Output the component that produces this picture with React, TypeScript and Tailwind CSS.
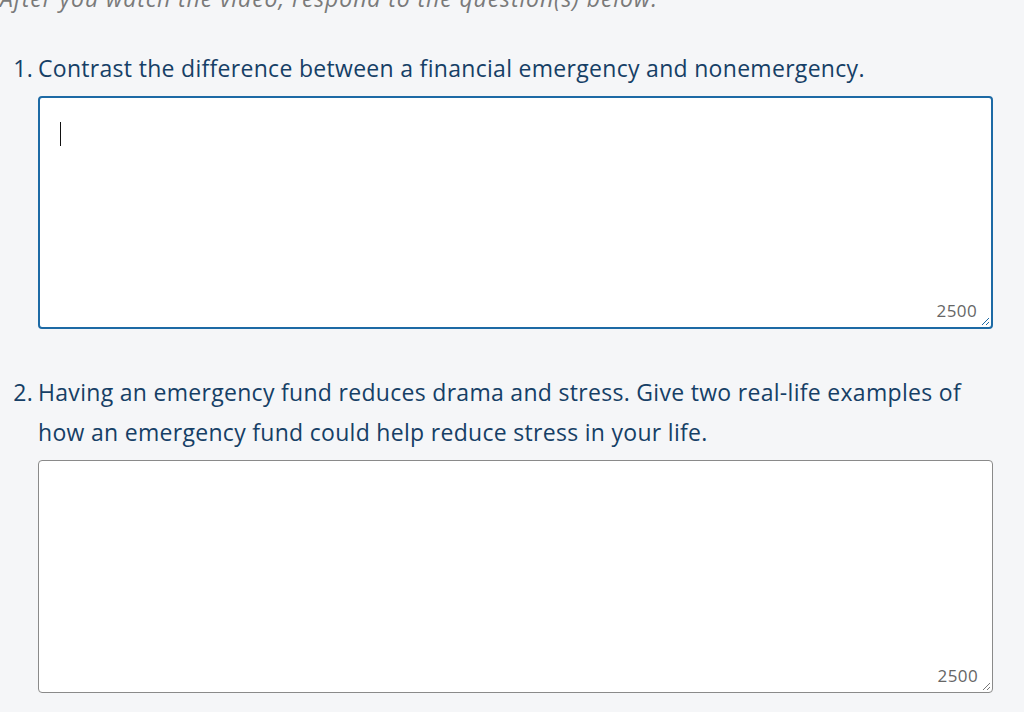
import React from "react";

const questions = [
  {
    num: "1.",
    text: "Contrast the difference between a financial emergency and nonemergency.",
    focused: true,
  },
  {
    num: "2.",
    text: "Having an emergency fund reduces drama and stress. Give two real-life examples of how an emergency fund could help reduce stress in your life.",
    focused: false,
  },
];

function ResizeGrip({ color }: { color: string }) {
  return (
    <svg className="absolute right-[1px] bottom-[1px]" width="10" height="10" viewBox="0 0 10 10">
      <line x1="9" y1="2" x2="2" y2="9" stroke={color} strokeWidth="1" />
      <line x1="9" y1="6" x2="6" y2="9" stroke={color} strokeWidth="1" />
    </svg>
  );
}

function AnswerBox({ focused }: { focused: boolean }) {
  return (
    <div
      className={
        focused
          ? "relative h-[233px] rounded-[4px] border-2 border-[#1d6aa5] bg-white"
          : "relative h-[233px] rounded-[4px] border border-[#8a8a8a] bg-white"
      }
    >
      {focused && <div className="absolute left-[20px] top-[24px] h-[24px] w-px bg-[#111]" />}
      <span className="absolute right-[14px] bottom-[6px] text-[17px] leading-5 tracking-[0.4px] text-[#666]">
        2500
      </span>
      <ResizeGrip color={focused ? "#1d6aa5" : "#777"} />
    </div>
  );
}

export default function App() {
  return (
    <div
      className="h-[712px] overflow-hidden bg-[#f5f6f8] pr-[31px]"
      style={{ fontFamily: "'Open Sans', Lato, sans-serif" }}
    >
      <p className="-mt-[22px] text-[23px] italic leading-[40px] tracking-[0.9px] text-[#7a7a7a]">
        After you watch the video, respond to the question(s) below.
      </p>

      <div className="mt-[30px] flex flex-col gap-[43px]">
        {questions.map((q) => (
          <div key={q.num} className="flex flex-col gap-[8px]">
            <div className="flex text-[23px] font-medium leading-[40px] tracking-[0.3px] text-[#163f66]">
              <span className="w-[38px] shrink-0 pr-[5px] text-right">{q.num}</span>
              <span>{q.text}</span>
            </div>
            <div className="ml-[38px]">
              <AnswerBox focused={q.focused} />
            </div>
          </div>
        ))}
      </div>
    </div>
  );
}
